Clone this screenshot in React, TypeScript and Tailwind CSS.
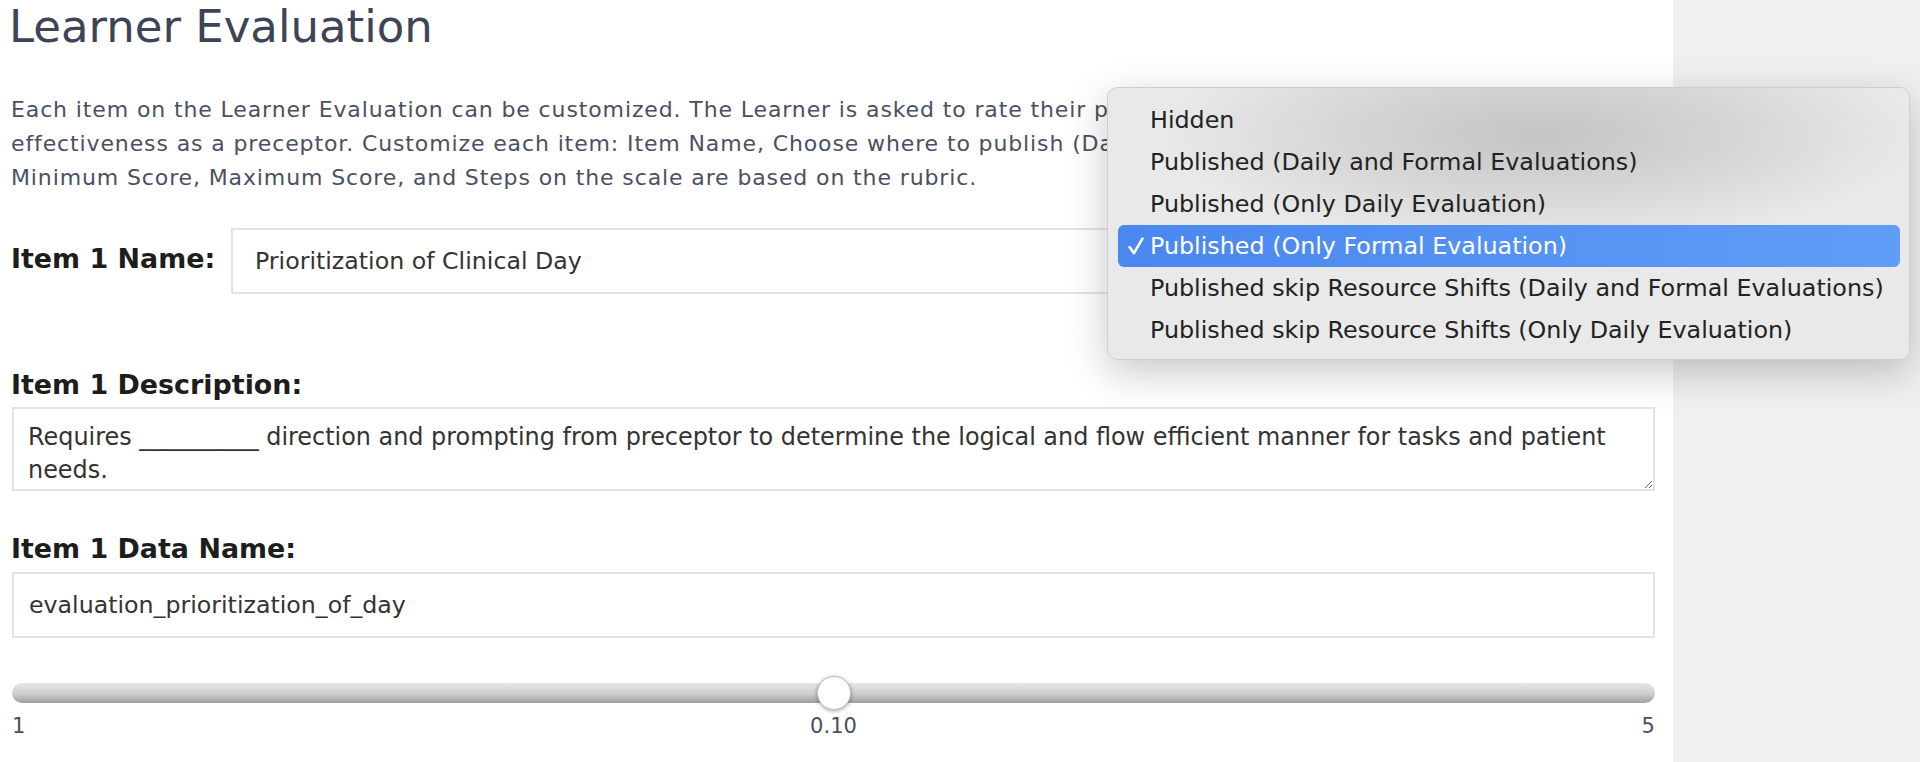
import { useState } from "react";

const OPTIONS = [
  { v: "hidden", l: "Hidden" },
  { v: "both", l: "Published (Daily and Formal Evaluations)" },
  { v: "daily", l: "Published (Only Daily Evaluation)" },
  { v: "formal", l: "Published (Only Formal Evaluation)" },
  { v: "skip-both", l: "Published skip Resource Shifts (Daily and Formal Evaluations)" },
  { v: "skip-daily", l: "Published skip Resource Shifts (Only Daily Evaluation)" },
];

function Check() {
  return (
    <svg width="16" height="18" viewBox="0 0 16 18" fill="none" stroke="currentColor" strokeWidth="2.6" strokeLinecap="round" strokeLinejoin="round">
      <path d="M1.6 10 L6 16.2 L14.4 1.6" />
    </svg>
  );
}

function PublishMenu({ value }: { value: string }) {
  return (
    <div className="absolute left-[1107px] top-[87px] h-[273px] w-[803px] rounded-[10px] border border-[#cfcfcf] bg-[radial-gradient(ellipse_380px_110px_at_54%_17%,#c4c4c4_0%,#d5d5d5_50%,#e9e9e9_100%)] pt-[11px] pb-[10px] shadow-[0_12px_40px_rgba(0,0,0,0.22)]">
      {OPTIONS.map((o) => {
        const on = o.v === value;
        return (
          <div
            key={o.v}
            className={
              on
                ? "ml-[10px] mr-[9px] flex h-[42px] items-center rounded-[6px] bg-[linear-gradient(90deg,#4a87ef,#5f9df7)] text-white"
                : "ml-[10px] mr-[9px] flex h-[42px] items-center text-[#222]"
            }
          >
            <span className="flex w-[32px] shrink-0 justify-start pl-[10px]">{on && <Check />}</span>
            <span className="whitespace-nowrap text-[23.8px] leading-[42px]">{o.l}</span>
          </div>
        );
      })}
    </div>
  );
}

export default function App() {
  const [publish, setPublish] = useState("formal");
  const [score, setScore] = useState(3);

  return (
    <div className="relative flex min-h-[762px] w-full overflow-hidden bg-white font-['DejaVu_Sans',sans-serif]">
      <main className="w-[1673px] shrink-0 pl-3 pr-[18px]">
        <h1 className="mt-[1px] -ml-[3px] text-[45px] font-normal leading-[52px] text-[#3e4457]">Learner Evaluation</h1>

        <p className="mt-[39.5px] -ml-[1px] text-[22px] leading-[34px] tracking-[0.88px] text-[#4a5064]">
          Each item on the Learner Evaluation can be customized. The Learner is asked to rate their preceptor's
          <br />
          effectiveness as a preceptor. Customize each item: Item Name, Choose where to publish (Daily, Formal), Item Description,
          <br />
          Minimum Score, Maximum Score, and Steps on the scale are based on the rubric.
        </p>

        <div className="mt-[33.5px] flex h-[66px] items-start">
          <label className="mt-[13.5px] w-[220px] shrink-0 -ml-[1px] text-[26.9px] font-bold leading-[34px] text-[#1d1d1d]">Item 1 Name:</label>
          <input
            className="h-[66px] min-w-0 flex-1 border-2 border-[#e3e3e3] bg-white pl-[22px] text-[23.7px] text-[#333] outline-none"
            defaultValue="Prioritization of Clinical Day"
          />
          <select
            value={publish}
            onChange={(e) => setPublish(e.target.value)}
            className="ml-3 h-[66px] w-[530px] shrink-0 border-2 border-[#e3e3e3] bg-white px-4 text-[23.5px] text-[#333]"
          >
            {OPTIONS.map((o) => (
              <option key={o.v} value={o.v}>{o.l}</option>
            ))}
          </select>
        </div>

        <label className="mt-[73.75px] block -ml-[1px] text-[26.9px] font-bold leading-[34px] text-[#1d1d1d]">Item 1 Description:</label>
        <textarea
          className="mt-[5.25px] block h-[84px] w-full border-2 border-[#e3e3e3] pt-3 pl-[14px] pr-[14px] text-[23.9px] leading-[33px] text-[#333] outline-none"
          defaultValue={"Requires __________ direction and prompting from preceptor to determine the logical and flow efficient manner for tasks and patient\nneeds."}
        />

        <label className="mt-[40.75px] block -ml-[1px] text-[26.9px] font-bold leading-[34px] text-[#1d1d1d]">Item 1 Data Name:</label>
        <input
          className="mt-[6px] block h-[66px] w-full border-2 border-[#e3e3e3] pl-[15px] text-[23.7px] text-[#333] outline-none"
          defaultValue="evaluation_prioritization_of_day"
        />

        <input
          type="range"
          min={1}
          max={5}
          value={score}
          onChange={(e) => setScore(Number(e.target.value))}
          className="mt-[45px] block h-5 w-full appearance-none rounded-full bg-[linear-gradient(180deg,#e6e6e6_0%,#cdcdcd_55%,#9f9f9f_100%)] outline-none [&::-webkit-slider-thumb]:h-[34px] [&::-webkit-slider-thumb]:w-[34px] [&::-webkit-slider-thumb]:appearance-none [&::-webkit-slider-thumb]:rounded-full [&::-webkit-slider-thumb]:border [&::-webkit-slider-thumb]:border-[#bdbdbd] [&::-webkit-slider-thumb]:bg-white [&::-webkit-slider-thumb]:shadow-[0_1px_4px_rgba(0,0,0,0.35)]"
        />
        <div className="mt-[10px] flex justify-between text-[21px] leading-[26px] text-[#4a5064]">
          <span>1</span>
          <span>0.10</span>
          <span>5</span>
        </div>
      </main>

      <aside className="flex-1 bg-[#f0f0f0]" />

      <PublishMenu value={publish} />
    </div>
  );
}
